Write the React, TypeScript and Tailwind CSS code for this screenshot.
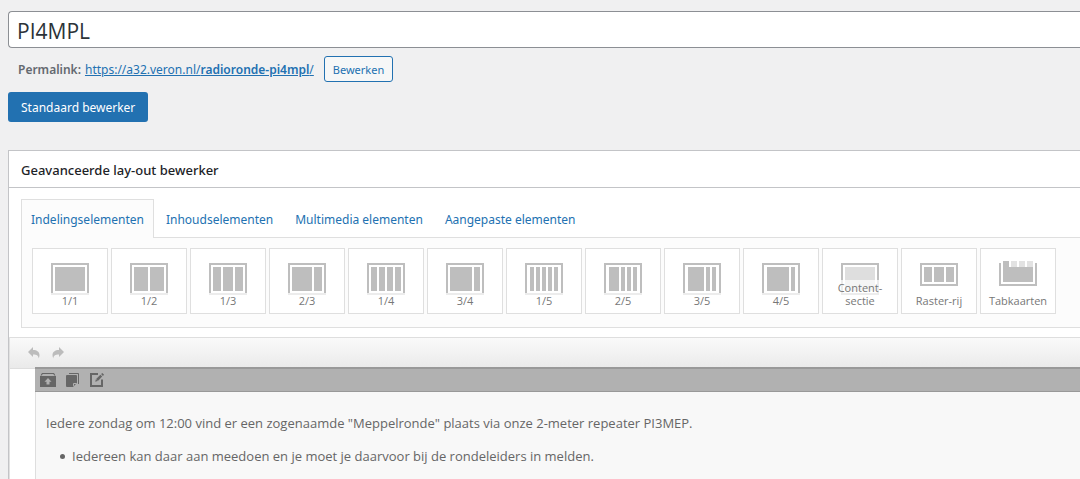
import { useState } from 'react';

type Block = [x: number, width: number];

interface LayoutItem {
  label: string;
  blocks: Block[];
  kind?: 'column' | 'section' | 'row' | 'tabs';
}

const TABS = ['Indelingselementen', 'Inhoudselementen', 'Multimedia elementen', 'Aangepaste elementen'];

const ITEMS: LayoutItem[] = [
  { label: '1/1', blocks: [[4, 30]] },
  { label: '1/2', blocks: [[4, 14], [20, 14]] },
  { label: '1/3', blocks: [[4, 8], [14, 10], [26, 8]] },
  { label: '2/3', blocks: [[4, 20], [26, 8]] },
  { label: '1/4', blocks: [[4, 6], [12, 6], [20, 6], [28, 6]] },
  { label: '3/4', blocks: [[4, 22], [28, 6]] },
  { label: '1/5', blocks: [[5, 4], [11, 4], [17, 4], [23, 4], [29, 4]] },
  { label: '2/5', blocks: [[5, 10], [17, 4], [23, 4], [29, 4]] },
  { label: '3/5', blocks: [[5, 16], [23, 4], [29, 4]] },
  { label: '4/5', blocks: [[5, 22], [29, 4]] },
  { label: 'Content-sectie', blocks: [[4, 30]], kind: 'section' },
  { label: 'Raster-rij', blocks: [[4, 8], [14, 10], [26, 8]], kind: 'row' },
  { label: 'Tabkaarten', blocks: [[4, 30]], kind: 'tabs' }
];

function LayoutIcon({ blocks, kind = 'column' }: { blocks: Block[]; kind?: LayoutItem['kind'] }) {
  const tall = kind === 'column' || kind === 'section';
  const height = tall ? 32 : 23;
  return (
    <svg width="38" height="34" viewBox="0 -2 38 34" fill="#bebebe" shapeRendering="crispEdges" aria-hidden="true">
      {kind !== 'tabs' && <rect width="38" height="2" />}
      <rect width="2" height={height} />
      <rect x="36" width="2" height={height} />
      <rect y={height - 2} width="38" height="2" />
      {blocks.map(([x, width]) => (
        <rect key={x} x={x} y="4" width={width} height={tall ? 24 : 15} fill={kind === 'section' ? '#dedede' : '#bebebe'} />
      ))}
      {kind === 'tabs' && (
        <>
          <rect x="4" y="-2" width="6" height="6" />
          <path d="M12-2h6v6h-6zM20-2h6v6h-6zM28-2h6v6h-6z" fill="#e2e2e2" />
        </>
      )}
    </svg>
  );
}

function LayoutCard({ item }: { item: LayoutItem }) {
  return (
    <button type="button" className="grid h-[66px] w-[76px] shrink-0 grid-cols-1 border border-[#dfdfdf] bg-white text-[11px] leading-[13px] text-[#777]">
      <span className="col-start-1 row-start-1 mt-3 w-[38px] justify-self-center">
        <LayoutIcon blocks={item.blocks} kind={item.kind} />
      </span>
      <span className="z-10 col-start-1 row-start-1 mb-[5px] self-end bg-white/70 px-1 pb-px pt-px text-center">{item.label}</span>
    </button>
  );
}

export default function App() {
  const [title, setTitle] = useState('PI4MPL');
  const [activeTab, setActiveTab] = useState(TABS[0]);

  return (
    <div className="min-h-screen overflow-hidden bg-[#f0f0f1] pl-2 pt-[11px] font-['Open_Sans',sans-serif] text-[13px] leading-5 text-[#3c434a]">
      <input
        type="text"
        aria-label="Titel"
        value={title}
        onChange={(e) => setTitle(e.target.value)}
        className="block h-[37px] w-full rounded-l border border-r-0 border-[#8c8f94] bg-white px-2 pt-0.5 text-[21px] text-[#2c3338] outline-none"
      />

      <div className="mt-2 flex h-[26px] items-center pl-2.5 font-['Noto_Sans',sans-serif] text-xs text-[#646970]">
        <strong className="pt-0.5 font-semibold">Permalink:</strong>
        <a href="https://a32.veron.nl/radioronde-pi4mpl/" className="ml-1 pt-0.5 text-[#2271b1] underline">
          https://a32.veron.nl/<span className="font-semibold">radioronde-pi4mpl</span>/
        </a>
        <button type="button" className="ml-2.5 h-[26px] rounded-[3px] border border-[#2271b1] bg-[#f6f7f7] px-2 pt-0.5 text-[11px] text-[#2271b1]">
          Bewerken
        </button>
      </div>

      <button type="button" className="mt-2.5 block h-[30px] rounded-[3px] bg-[#2271b1] px-[13px] pt-0.5 font-['Noto_Sans',sans-serif] text-xs text-white">
        Standaard bewerker
      </button>

      <section className="mt-7 min-h-[340px] border-l border-t border-[#c3c4c7] bg-white">
        <h2 className="flex h-[37px] items-center border-b border-[#c3c4c7] pl-3 pt-0.5 font-['Noto_Sans',sans-serif] font-medium text-[#1d2327]">
          Geavanceerde lay-out bewerker
        </h2>

        <div className="pl-3 pt-[11px]">
          <div role="tablist" className="flex gap-0.5 border-b border-[#dfdfdf] font-['Noto_Sans',sans-serif] text-xs">
            {TABS.map((tab) => (
              <button
                key={tab}
                type="button"
                role="tab"
                aria-selected={tab === activeTab}
                onClick={() => setActiveTab(tab)}
                className={`-mb-px h-[39px] shrink-0 border border-b-0 px-[9px] pt-0.5 text-[#2271b1] ${tab === activeTab ? 'border-[#dfdfdf] bg-[#fcfcfc]' : 'border-transparent'}`}
              >
                {tab}
              </button>
            ))}
          </div>
          <div className="flex gap-[3px] border-b border-l border-[#dfdfdf] bg-[#fcfcfc] pb-[13px] pl-2.5 pt-2.5">
            {ITEMS.map((item) => (
              <LayoutCard key={item.label} item={item} />
            ))}
          </div>
        </div>

        <div className="mt-[9px] border-l border-[#e1e1e1]">
          <div className="flex h-8 items-center gap-3 border-y border-[#dedede] bg-linear-to-b from-[#fafafa] to-[#eaeaea] pl-[18px] text-[#bcbcbc]">
            <button type="button" aria-label="Ongedaan maken">
              <svg width="12" height="12" viewBox="0 0 12 12" fill="currentColor" aria-hidden="true">
                <path d="M5 0v3c4 0 6.500 2 6.500 5 0 1.200-.3 2.400-.8 3.400-.2-2.400-1.700-3.900-5.700-3.900v2.500L0 5z" />
              </svg>
            </button>
            <button type="button" aria-label="Opnieuw">
              <svg width="12" height="12" viewBox="0 0 12 12" fill="currentColor" aria-hidden="true">
                <path d="M7 0v3C3 3 .5 5 .5 8c0 1.200.3 2.400.8 3.400C1.500 9 3 7.500 7 7.500V10l5-5z" />
              </svg>
            </button>
          </div>

          <div className="-mt-0.5 ml-[25px] min-h-[120px] border-l border-[#dedede] bg-[#f8f8f8] text-[#666]">
            <div className="-ml-px flex h-[25px] items-center gap-2.5 border-b border-t-2 border-[#999] bg-[#b1b1b1] pb-px pl-[5px]">
              <button type="button" aria-label="Opslaan als sjabloon">
                <svg width="16" height="14" viewBox="0 0 16 14" fill="#666" aria-hidden="true">
                  <path d="M2 0h12l1.500 2.500h-1.200L13.300 1H2.700l-1 1.500H.5z" />
                  <path fillRule="evenodd" d="M0 3h16v11H0zM8 5 4.500 8.700h2V11.500h3V8.700h2z" />
                </svg>
              </button>
              <button type="button" aria-label="Dupliceren">
                <svg width="14" height="14" viewBox="0 0 14 14" fill="#666" aria-hidden="true">
                  <path d="M3 0h9q1 0 1 1v10h-1V1H3z" />
                  <path d="M0 3q0-1 1-1h9q1 0 1 1v7l-4 4H1q-1 0-1-1z" />
                  <path d="M7 13.500V11q0-1 1-1h3l-1 1H8v1.500z" fill="#b1b1b1" />
                </svg>
              </button>
              <button type="button" aria-label="Bewerken">
                <svg width="16" height="15" viewBox="1 0 16 15" fill="none" stroke="#666" aria-hidden="true">
                  <path d="M9 2H2v12h11V7.500" strokeWidth="2" />
                  <path d="m8 8 4.300-4.300" strokeWidth="2.500" />
                  <path d="m13 3 1.200-1.200" strokeWidth="2.500" />
                  <path d="M6.200 9.800 6.900 7.300l1.800 1.800z" fill="#666" stroke="none" />
                </svg>
              </button>
            </div>
            <div className="pl-2.5 pt-[21px]">
              <p>Iedere zondag om 12:00 vind er een zogenaamde "Meppelronde" plaats via onze 2-meter repeater PI3MEP.</p>
              <ul className="mt-[13px] pl-3.5">
                <li className="flex items-center gap-[7px] before:size-[5px] before:shrink-0 before:rounded-full before:bg-[#666]">
                  Iedereen kan daar aan meedoen en je moet je daarvoor bij de rondeleiders in melden.
                </li>
              </ul>
            </div>
          </div>
        </div>
      </section>
    </div>
  );
}
